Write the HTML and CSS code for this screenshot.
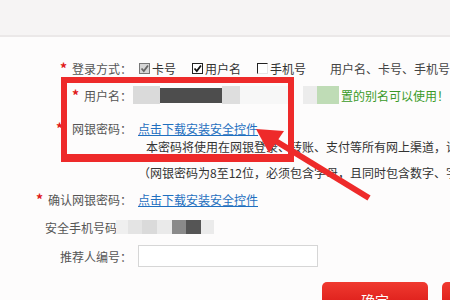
FILE: index.html
```html
<!DOCTYPE html>
<html lang="zh-CN">
<head>
    <meta charset="UTF-8">
    <title>网银注册</title>
    <link rel="stylesheet" href="styles.css">
</head>
<body>
    <div class="topbar"></div>

    <div class="form">
        <div class="row row-login">
            <span class="lbl"><i class="req">*</i>登录方式：</span>
            <div class="val">
                <span class="opt"><span class="cb cb-grey"><svg viewBox="0 0 9 9"><path d="M1.5 4.5 L3.8 7 L8 1.5" /></svg></span>卡号</span>
                <span class="opt"><span class="cb"><svg viewBox="0 0 9 9"><path d="M1.5 4.5 L3.8 7 L8 1.5" /></svg></span>用户名</span>
                <span class="opt"><span class="cb cb-empty"></span>手机号</span>
                <span class="hint">用户名、卡号、手机号</span>
            </div>
        </div>

        <div class="row row-user">
            <span class="lbl"><i class="req">*</i>用户名：</span>
            <div class="val">
                <div class="mosaic">
                    <span class="m m1"></span>
                    <span class="m m2"></span>
                    <span class="m m3"></span>
                    <span class="m m4"></span>
                </div>
                <span class="m m5"></span>
                <span class="m m6"></span>
                <span class="ok">置的别名可以使用！</span>
            </div>
        </div>

        <div class="row row-pwd">
            <span class="lbl"><i class="req req-wide">*</i>网银密码：</span>
            <div class="val"><a href="#" class="link">点击下载安装安全控件</a></div>
        </div>

        <div class="row row-note">本密码将使用在网银登录、转账、支付等所有网上渠道，请</div>
        <div class="row row-rule">（网银密码为8至12位，必须包含字母，且同时包含数字、字</div>

        <div class="row row-confirm">
            <span class="lbl"><i class="req">*</i>确认网银密码：</span>
            <div class="val"><a href="#" class="link">点击下载安装安全控件</a></div>
        </div>

        <div class="row row-phone">
            <span class="lbl lbl-plain">安全手机号码</span>
            <div class="val phone-blur">
                <span class="p p1"></span>
                <span class="p p2"></span>
                <span class="p p3"></span>
                <span class="p p4"></span>
                <span class="p p5"></span>
                <span class="p p6"></span>
                <span class="p p7"></span>
            </div>
        </div>

        <div class="row row-ref">
            <span class="lbl">推荐人编号：</span>
            <div class="val"><input type="text" class="ref-input"></div>
        </div>

        <div class="actions">
            <button class="btn">确定</button>
            <button class="btn btn-next"></button>
        </div>
    </div>

    <!-- annotation overlay -->
    <div class="mark"></div>
    <svg class="arrow" width="450" height="300" viewBox="0 0 450 300">
        <line x1="369" y1="198" x2="274" y2="140" />
        <polygon points="256,129 284,131 269,153" />
    </svg>
</body>
</html>
```

FILE: styles.css
```css
body {
    margin: 0;
    width: 450px;
    height: 300px;
    overflow: hidden;
    position: relative;
    font-family: "Noto Sans CJK SC", "Noto Sans", sans-serif;
    font-size: 12px;
    color: #333;
    background-color: #fdfcfc;
}

.topbar {
    height: 35px;
    background-color: #f6f4f4;
    border-bottom: 2px solid #ebe8e8;
}

.form {
    padding-top: 19px;
}

.row {
    display: flex;
    align-items: center;
    white-space: nowrap;
}

.lbl {
    width: 132px;
    flex-shrink: 0;
    box-sizing: border-box;
    text-align: right;
    color: #555;
}

.lbl-plain {
    padding-right: 15px;
}

.req {
    font-style: normal;
    font-size: 14px;
    font-weight: bold;
    color: #e01818;
    margin-right: 5px;
}

.req-wide {
    margin-right: 9px;
}

.val {
    margin-left: 6px;
    display: flex;
    align-items: center;
}

/* row spacing */
.row-login { height: 24px; }
.row-user { height: 24px; margin-top: 3px; }
.row-pwd { height: 20px; margin-top: 11px; }
.row-note { height: 16px; padding-left: 146px; }
.row-rule { height: 20px; margin-top: 8px; padding-left: 138px; }
.row-confirm { height: 20px; margin-top: 7px; }
.row-phone { height: 20px; margin-top: 8px; }
.row-ref { height: 22px; margin-top: 8px; }

/* checkboxes */
.opt {
    display: flex;
    align-items: center;
    margin-right: 16px;
}

.opt:first-child {
    margin-left: 1px;
}

.cb {
    width: 9px;
    height: 9px;
    border: 1px solid #222;
    background-color: #fff;
    margin-right: 2px;
    display: flex;
}

.cb svg {
    width: 9px;
    height: 9px;
}

.cb path {
    fill: none;
    stroke: #111;
    stroke-width: 1.8;
}

.cb-grey {
    border-color: #777;
    background-color: #d6d6d6;
}

.cb-grey path {
    stroke: #666;
}

.cb-empty {
    border-right-color: #e6e6e6;
    border-bottom-color: #e6e6e6;
}

.hint {
    margin-left: 8px;
    color: #444;
}

/* blurred user name */
.mosaic {
    display: flex;
    align-items: center;
    margin-left: -5px;
    height: 18px;
}

.m {
    display: block;
    height: 18px;
}

.m1 { width: 27px; background-color: #dadada; }
.m2 { width: 62px; height: 15px; background-color: #4d4d4d; }
.m3 { width: 18px; background-color: #dedede; }
.m4 { width: 50px; background-color: #f7f7f7; }
.m5 { width: 14px; margin-left: 13px; background-color: #ececec; }
.m6 { width: 22px; background-color: #bfdcb6; }

.ok {
    color: #3a9a28;
    margin-left: 2px;
}

.link {
    color: #1f6fbf;
    text-decoration: underline;
}

/* blurred phone number */
.phone-blur {
    margin-left: -16px;
    height: 14px;
}

.p {
    display: block;
    height: 14px;
}

.p1 { width: 12px; background-color: #efefef; }
.p2 { width: 14px; background-color: #e4e4e4; }
.p3 { width: 15px; background-color: #dadada; }
.p4 { width: 15px; background-color: #eaeaea; }
.p5 { width: 14px; background-color: #8a8a8a; }
.p6 { width: 15px; background-color: #555; }
.p7 { width: 13px; background-color: #ebebeb; }

.ref-input {
    width: 180px;
    height: 22px;
    box-sizing: border-box;
    border: 1px solid #d6d6d6;
    background-color: #fff;
    margin: 0;
}

/* buttons */
.actions {
    display: flex;
    gap: 14px;
    margin-top: 15px;
    padding-left: 322px;
}

.btn {
    flex-shrink: 0;
    width: 106px;
    height: 36px;
    border: none;
    border-radius: 5px;
    background: linear-gradient(#f03a30, #d20e0e);
    color: #fff;
    font-family: inherit;
    font-size: 14px;
    line-height: 36px;
    padding: 0;
}

/* red annotation */
.mark {
    position: absolute;
    left: 61px;
    top: 77px;
    width: 233px;
    height: 85px;
    box-sizing: border-box;
    border: 6px solid #ee2a2a;
    border-bottom-width: 8px;
}

.arrow {
    position: absolute;
    left: 0;
    top: 0;
}

.arrow line {
    stroke: #ee2a2a;
    stroke-width: 6;
}

.arrow polygon {
    fill: #ee2a2a;
}
```
